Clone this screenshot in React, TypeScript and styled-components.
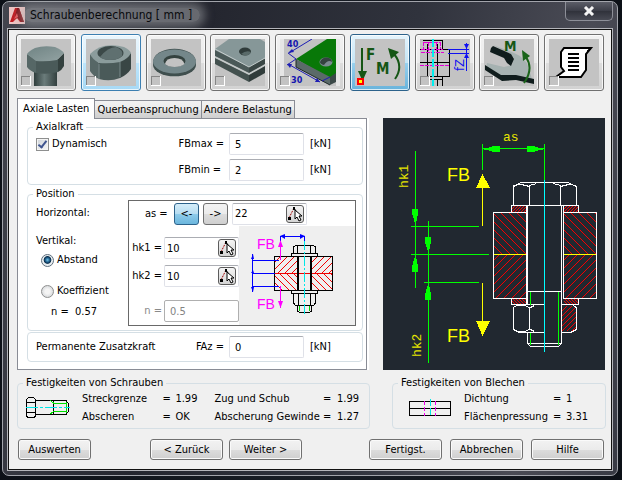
import React from 'react';
import styled, { createGlobalStyle, css } from 'styled-components';

const GlobalStyle = createGlobalStyle`
  *, *::before, *::after { box-sizing: border-box; }
  body {
    margin: 0;
    background: #10141b;
    color: #000;
    font: 11px/14px "DejaVu Sans Condensed", "DejaVu Sans", sans-serif;
    font-stretch: condensed;
  }
  button, input { font: inherit; color: inherit; margin: 0; }
`;

/* ---------- window ---------- */

const Desktop = styled.div`
  min-height: 100vh;
  padding: 1px 4px 4px 2px;
  background: linear-gradient(90deg, #0c1017, #181d25 50%, #0c1017);
`;

const Window = styled.div`
  border: 1px solid #a2a4ab;
  border-radius: 7px;
  padding: 0 4px 4px;
  background: linear-gradient(100deg, #43454e 0, #24262f 30%, #30333d 60%, #4a4b55 85%, #383a44 100%);
`;

const TitleBar = styled.header`
  display: flex;
  align-items: center;
  height: 26px;
  gap: 5px;
  padding-left: 2px;
`;

const Title = styled.h1`
  flex: 1;
  margin: 0;
  font-size: 12px;
  line-height: 22px;
  font-weight: 400;
  color: #08090c;

  span {
    padding: 0 8px 0 6px;
    margin-left: -6px;
    border-radius: 10px;
    background: rgba(168, 169, 174, 0.5);
    box-shadow: 0 0 10px 5px rgba(168, 169, 174, 0.5);
  }
`;

const CloseButton = styled.button`
  align-self: flex-start;
  width: 48px;
  height: 19px;
  padding: 0;
  border: 1px solid #8d8f98;
  border-top: 0;
  border-radius: 0 0 5px 5px;
  background: linear-gradient(#5b5d67, #3b3d47 50%, #30323b 51%, #484a54);
  svg { display: block; margin: 0 auto; }
`;

const Client = styled.main`
  border: 1px solid #b4b5ba;
  outline: 1px solid #111;
  outline-offset: -2px;
  padding: 5px 7px 10px 9px;
  background: #f0f0f0;
`;

/* ---------- toolbar ---------- */

const Toolbar = styled.div`
  display: flex;
  justify-content: space-between;
  margin: 0 1px 7px -1px;
`;

type ToolState = 'normal' | 'hover' | 'active';

const toolStates = {
  normal: css`
    border-color: #707070;
    background: linear-gradient(#f2f2f2, #ebebeb 50%, #dddddd 51%, #d2d2d2);
  `,
  hover: css`
    border-color: #3c7fb1;
    background: linear-gradient(#eaf6fd, #d9f0fc 50%, #bee6fd 51%, #a7d9f5);
  `,
  active: css`
    border-color: #2c628b;
    background: linear-gradient(#e5f4fc, #c4e5f6 50%, #98d1ef 51%, #68b3db);
  `,
};

const ToolButton = styled.button<{ $state: ToolState }>`
  height: 57px;
  padding: 4px;
  border: 1px solid;
  border-radius: 3px;
  box-shadow: inset 0 0 0 1px rgba(255, 255, 255, 0.75);
  ${(p) => toolStates[p.$state]}
  svg { display: block; background: #c3c3c3; }
`;

/* ---------- tabs and groups ---------- */

const Main = styled.div`
  display: grid;
  grid-template-columns: minmax(0, 350fr) minmax(0, 222fr);
  column-gap: 16px;
  align-items: end;
`;

const TabList = styled.div`
  display: flex;
  align-items: flex-end;
  height: 20px;
`;

const Tab = styled.button<{ $selected?: boolean }>`
  position: relative;
  height: ${(p) => (p.$selected ? 21 : 18)}px;
  padding: 0 ${(p) => (p.$selected ? 5 : 2)}px;
  border: 1px solid #898c95;
  border-bottom: 0;
  white-space: nowrap;
  background: ${(p) => (p.$selected ? '#fff' : 'linear-gradient(#f2f2f2, #ebebeb 50%, #dddddd 51%, #cfcfcf)')};
  margin-bottom: ${(p) => (p.$selected ? -1 : 0)}px;
  & + & { margin-left: -1px; }
`;

const TabPanel = styled.div`
  display: flex;
  flex-direction: column;
  border: 1px solid #898c95;
  box-shadow: 2px 0 0 #fff;
  padding: 2px 3px 7px 9px;
  background: #fff;
`;

const Group = styled.fieldset`
  min-width: 0;
  margin: 0;
  border: 1px solid #d5dfe5;
  border-radius: 4px;
  padding: 0 7px 3px 8px;
`;

const Legend = styled.legend`
  margin-left: -3px;
  padding: 0 3px;
  line-height: 12px;
`;

const AxialGrid = styled.div`
  display: grid;
  grid-template-columns: 1fr auto 75px 46px;
  align-items: center;
  gap: 4px 5px;
`;

const Unit = styled.span`
  padding-left: 1px;
`;

const CheckLabel = styled.label`
  display: flex;
  align-items: center;
  gap: 3px;
`;

const CheckBox = styled.input`
  appearance: none;
  display: grid;
  place-items: center;
  width: 13px;
  height: 13px;
  border: 1px solid #8e8f8f;
  background: linear-gradient(135deg, #cfd4da, #f6f6f6);
  box-shadow: inset 0 0 0 1px #f4f4f4;
  &:checked::before {
    content: "";
    width: 5px;
    height: 9px;
    margin-bottom: 2px;
    border: solid #3f548f;
    border-width: 0 2px 2px 0;
    transform: rotate(38deg);
  }
`;

const TextBox = styled.input`
  width: 75px;
  height: 22px;
  padding: 0 5px;
  border: 1px solid #dfe1e8;
  border-top-color: #abadb3;
  border-radius: 2px;
  background: #fff;
  &:disabled { color: #838383; border-color: #afafaf; }
`;

const PositionGroup = styled(Group)`
  margin: 3px 0 1px;
  padding-right: 6px;
  padding-bottom: 4px;
`;

const PositionLayout = styled.div`
  display: grid;
  grid-template-columns: 92px minmax(0, 1fr);
`;

const ModeColumn = styled.div`
  display: flex;
  flex-direction: column;
  padding-top: 6px;
`;

const ModeTitle = styled.span`
  margin-bottom: 14px;
  & + & { margin-bottom: 5px; }
`;

const RadioLabel = styled.label`
  display: flex;
  align-items: center;
  gap: 3px;
  height: 14px;
  margin-left: 5px;
  margin-bottom: 17px;
  & + & { margin-bottom: 7px; }
`;

const Radio = styled.input`
  appearance: none;
  width: 13px;
  height: 13px;
  border: 1px solid #8e8f8f;
  border-radius: 50%;
  background: radial-gradient(#f4f4f4 30%, #c8ccd0);
  &:checked {
    border-color: #5e6e7c;
    background: radial-gradient(circle at 50% 45%, #6fc4ea 0, #17527d 30%, #0d2f4c 42%, #e8edf0 52%);
  }
`;

const Coefficient = styled.span`
  padding-left: 15px;
`;

const PositionBox = styled.div`
  display: grid;
  grid-template-columns: minmax(0, 110fr) minmax(0, 116fr);
  border: 1px solid #696969;
`;

const HorizontalRow = styled.div`
  grid-column: 1 / -1;
  display: flex;
  align-items: center;
  height: 25px;
  padding-left: 16px;
  gap: 4px;
`;

const ArrowButton = styled.button<{ $active?: boolean }>`
  width: 25px;
  height: 22px;
  padding: 0;
  border: 1px solid ${(p) => (p.$active ? '#2c628b' : '#707070')};
  border-radius: 3px;
  background: ${(p) =>
    p.$active
      ? 'linear-gradient(#d5edf9, #b5dcf1 50%, #8fcbea 51%, #6bb6dd)'
      : 'linear-gradient(#f2f2f2, #ebebeb 50%, #dddddd 51%, #cfcfcf)'};
`;

const AxisLabel = styled.label`
  width: 25px;
`;

const PickBox = styled.span`
  display: flex;
  align-items: center;
  width: 75px;
  height: 22px;
  padding: 0 2px;
  border: 1px solid #dfe1e8;
  border-top-color: #abadb3;
  border-radius: 2px;
  background: #fff;
`;

const PickInput = styled.input`
  flex: 1;
  width: 0;
  height: 18px;
  padding: 0;
  border: 0;
  background: transparent;
`;

const PickButton = styled.button`
  width: 18px;
  height: 18px;
  padding: 0;
  border: 1px solid #5c5c5c;
  border-radius: 3px;
  background: linear-gradient(#f4f4f4, #d4d4d4);
  svg { display: block; }
`;

const VerticalFields = styled.div`
  display: flex;
  flex-direction: column;
  gap: 6px;
  padding-top: 11px;
`;

const FieldRow = styled.label<{ $muted?: boolean }>`
  display: flex;
  align-items: center;
  justify-content: flex-end;
  gap: 2px;
  white-space: nowrap;
  color: ${(p) => (p.$muted ? '#8a8a8a' : '#000')};
  margin-top: ${(p) => (p.$muted ? 7 : 0)}px;
`;

const Sketch = styled.svg`
  display: block;
  width: 100%;
  height: auto;
`;

const ForceGroup = styled(Group)`
  padding-top: 3px;
`;

/* ---------- results ---------- */

const Results = styled.div`
  display: grid;
  grid-template-columns: minmax(0, 353fr) minmax(0, 214fr);
  column-gap: 22px;
  margin: 7px -1px 10px 0;
`;

const ResultTable = styled.div<{ $wide?: boolean }>`
  display: grid;
  grid-template-columns: ${(p) => (p.$wide ? '56px 80fr 13px 39px 108fr 14px 32px' : '63px 89fr 13px 39px')};
  grid-auto-rows: 18px;
  align-items: center;
  padding-top: 1px;
  white-space: nowrap;
  svg { grid-row: 1 / 3; display: block; }
`;

const ResultGroup = styled(Group)`
  padding: 0 0 2px 8px;
`;

const Footer = styled.footer`
  display: grid;
  grid-template-columns: auto 59fr auto 67fr auto;
  padding: 0 1px;
`;

const ButtonSet = styled.div<{ $column: number; $gap: number }>`
  grid-column: ${(p) => p.$column};
  display: flex;
  gap: ${(p) => p.$gap}px;
`;

const PushButton = styled.button`
  width: 73px;
  height: 21px;
  padding: 0;
  border: 1px solid #707070;
  border-radius: 3px;
  box-shadow: inset 0 0 0 1px #fafafa;
  background: linear-gradient(#f2f2f2, #ebebeb 50%, #dddddd 51%, #cfcfcf);
`;

/* ---------- icons ---------- */

const Marker = () => (
  <g shapeRendering="crispEdges">
    <rect x="0" y="37" width="9" height="9" fill="#c3c3c3" />
    <path d="M0.5 46V37.5H9" fill="none" stroke="#858585" />
    <path d="M0 46.500H9.500V37" fill="none" stroke="#fff" />
  </g>
);

const ToolPicture = ({ width = 50, children }: { width?: number; children: React.ReactNode }) => (
  <svg width={width} height="47" viewBox={`0 0 ${width} 47`} aria-hidden="true">
    {children}
  </svg>
);

const BoltIcon = () => (
  <ToolPicture>
    <defs>
      <linearGradient id="steel">
        <stop offset="0" stopColor="#2f3d3c" />
        <stop offset="0.45" stopColor="#6b7c7b" />
        <stop offset="1" stopColor="#33403f" />
      </linearGradient>
      <linearGradient id="steelTop" x1="0" y1="0" x2="1" y2="1">
        <stop offset="0" stopColor="#6f8383" />
        <stop offset="1" stopColor="#93a3a3" />
      </linearGradient>
    </defs>
    <path d="M13 30H36V47H13Z" fill="url(#steel)" />
    <path d="M6 15L15 21V34Q9 32 6 28Z" fill="#566766" />
    <path d="M15 21L37 20V33Q26 36 15 34Z" fill="#4a5a59" />
    <path d="M37 20L43 14V27Q41 31 37 33Z" fill="#34413f" />
    <path d="M6 15Q8 12 14 9Q23 6 34 8Q41 11 43 14L36 21Q25 23 15 22Z" fill="url(#steelTop)" />
    <Marker />
  </ToolPicture>
);

const NutIcon = () => (
  <ToolPicture>
    <path d="M4 15L13 24V40Q7 37 4 32Z" fill="#566766" />
    <path d="M13 24L34 22V39Q24 43 13 40Z" fill="#4a5a59" />
    <path d="M34 22L45 14V30Q41 36 34 39Z" fill="#394645" />
    <path d="M4 15Q10 9 18 7Q28 5 38 8Q44 11 45 14Q42 20 34 23Q24 25 13 24Q6 20 4 15Z" fill="#8b9c9c" />
    <ellipse cx="24.500" cy="14" rx="13" ry="7" fill="#3b4948" />
    <path d="M14 18Q22 8 30 8Q38 11 36 17Q32 21 24 21Q17 21 14 18Z" fill="#5f7070" />
    <path d="M13 25V40M34 23V38" stroke="#78898a" strokeWidth="1" />
    <Marker />
  </ToolPicture>
);

const WasherIcon = () => (
  <ToolPicture>
    <path d="M2 23A21 13 0 0 1 45 23V26A21 11 0 0 1 2 26Z" fill="#3f4f4e" />
    <ellipse cx="23.500" cy="22.500" rx="21.500" ry="12" fill="#74878a" />
    <ellipse cx="23.500" cy="22" rx="11" ry="6" fill="#34423f" />
    <path d="M14 25Q15 19 23.500 19Q32 19 33.500 25Q30 28 23.500 28Q17 28 14 25Z" fill="#c3c3c3" />
    <Marker />
  </ToolPicture>
);

const PlatesIcon = () => (
  <ToolPicture>
    <path d="M0 10L14 0H45L50 3V20L34 29L0 11Z" fill="#869798" />
    <path d="M0 11L34 28V34L0 17Z" fill="#4a5958" />
    <path d="M34 28L50 19V25L34 34Z" fill="#394645" />
    <path d="M0 19L34 36V43L0 25Z" fill="#43514f" />
    <path d="M34 36L50 27V34L34 43Z" fill="#303c3b" />
    <path d="M0 18L34 35L50 26M0 10L34 28L50 19" fill="none" stroke="#c4cdcc" />
    <ellipse cx="30" cy="12.500" rx="6" ry="4" fill="#2f3b3a" />
    <path d="M26 15Q31 11 36 13Q34 17 30 16.500Z" fill="#596a69" />
    <Marker />
  </ToolPicture>
);

const DimensionsIcon = () => (
  <ToolPicture width={60}>
    <path d="M16 20L47 0H56V37L50 40Z" fill="#087808" />
    <path d="M16 20L50 38V46L16 28Z" fill="#5b6a69" />
    <path d="M50 38L56 34V43L50 46Z" fill="#3b4948" />
    <path d="M16 20V28L50 46" fill="none" stroke="#1c2626" />
    <ellipse cx="46" cy="23" rx="6.500" ry="4.500" fill="#7b8a90" />
    <path d="M40 23Q42 18 47 18.500Q52 19 52 23Q48 20 44 26Q40 25 40 23Z" fill="#34433f" />
    <path d="M32 0L9 14M16 20L8 14M16 20L7 26M50 38L42 42M8 25L40 43" fill="none" stroke="#1d1db4" />
    <path d="M8 14L12 10L14 13ZM7 25L12 25L10 29ZM40 43L35 43L37 39Z" fill="#1d1db4" />
    <text x="7" y="8" fill="#1414b0" fontFamily="DejaVu Sans" fontSize="9" fontWeight="700">40</text>
    <text x="11" y="44" fill="#1414b0" fontFamily="DejaVu Sans" fontSize="9" fontWeight="700">30</text>
    <path d="M56 0H60V47H56ZM0 0H4V47H0Z" fill="#e6e6e6" shapeRendering="crispEdges" />
    <Marker />
  </ToolPicture>
);

const LoadsIcon = () => (
  <ToolPicture>
    <path d="M7 9V33" stroke="#155615" strokeWidth="2" />
    <path d="M3 32H12L7.500 42Z" fill="#155615" />
    <text x="11" y="21" fill="#155615" fontFamily="DejaVu Sans" fontSize="15" fontWeight="700">F</text>
    <text x="21" y="35" fill="#155615" fontFamily="DejaVu Sans" fontSize="15" fontWeight="700">M</text>
    <path d="M40 40Q49 27 39 15" fill="none" stroke="#155615" strokeWidth="2" />
    <path d="M33 9L44 13L36 20Z" fill="#155615" />
    <g shapeRendering="crispEdges">
      <rect x="2" y="39" width="7" height="7" fill="#f00" />
      <rect x="4" y="41" width="3" height="3" fill="#ff0" />
    </g>
  </ToolPicture>
);

const PreloadIcon = () => (
  <ToolPicture>
    <g fill="none" shapeRendering="crispEdges">
      <path d="M0 10.500H29.500V37.500H0M0 23.500H29M7.500 5V37M17.500 5V37M3 1.500H22M22.500 1V10M2.500 37V47M7.500 40V47M17.500 40V47M22.500 37V47M2 40.500H23" stroke="#000" />
      <path d="M4 3.500H21M3.500 3V10M20.500 3V10M1 10.500H23M1 13.500H24M8.500 3V13M16.500 3V13M0 26.500H29" stroke="#e400d8" strokeDasharray="4 1" />
      <path d="M12.500 0V47" stroke="#00f0f0" strokeWidth="2" strokeDasharray="8 2" />
      <path d="M28 10.500H49M28 14.500H49M46.500 4V32" stroke="#1010f0" />
    </g>
    <path d="M44 5H49L46.500 10ZM44 19H49L46.500 14Z" fill="#1010f0" />
    <text transform="translate(44 32) rotate(-90)" fill="#1010f0" fontFamily="DejaVu Sans" fontSize="13">fZ</text>
    <Marker />
  </ToolPicture>
);

const WrenchIcon = () => (
  <ToolPicture>
    <path d="M9 6L28 13L36 17L43 24L48 40L32 37L18 38L2 30L3 24L20 28L28 26L30 19L26 15Z" fill="#a6b2b1" />
    <path d="M7 9L9 7L27 15L30 20L27 27L23 24L20 19L6 13Z" fill="#101d1d" />
    <path d="M1 26L17 36L32 36L50 40V45L32 41L18 42L1 31Z" fill="#101d1d" />
    <text x="20" y="12" fill="#155615" fontFamily="DejaVu Sans" fontSize="14" fontWeight="700">M</text>
    <path d="M40 44Q50 30 42 18" fill="none" stroke="#196419" strokeWidth="2" />
    <path d="M38 11L46 17L39 22Z" fill="#196419" />
    <Marker />
  </ToolPicture>
);

const ReportIcon = () => (
  <ToolPicture>
    <path d="M15 9H42L37 15V31L32 38H7L15 32L12 28V13Z" fill="#fff" stroke="#000" strokeWidth="2" />
    <path d="M38 12L42 9M7 38L14 33" stroke="#000" />
    <path d="M19 15H30M19 19H30M19 23H30M19 27H30M19 31H30" stroke="#000" strokeWidth="2" shapeRendering="crispEdges" />
    <Marker />
  </ToolPicture>
);

const AppLogo = () => (
  <svg width="16" height="17" viewBox="0 0 16 17" aria-hidden="true">
    <rect width="16" height="17" fill="#eec4c2" />
    <path d="M6 1H10L15 15H11L8 11L4 15H1Z" fill="#c01a20" />
    <path d="M8 1H10L15 15H12L8 10L7 12L6 10Z" fill="#7e0c12" />
    <path d="M5 12L8 6L9 10Z" fill="#e6555a" />
  </svg>
);

const PickIcon = () => (
  <svg width="16" height="16" viewBox="0 0 16 16" aria-hidden="true">
    <path d="M2 12L7 2" stroke="#a00000" strokeDasharray="2 1" />
    <path d="M7 2L13 11" stroke="#000" />
    <rect x="1" y="11" width="3" height="3" />
    <rect x="6" y="1" width="2" height="3" />
    <path d="M8 4V13L10 11L12 15L14 14L12 10H15Z" fill="#fff" stroke="#000" />
  </svg>
);

interface HatchProps {
  x: number;
  y: number;
  width: number;
  height: number;
  step: number;
  rising?: boolean;
}

/* Section hatching: 45 degree lines, clipped to the given rectangle. */
const Hatch = ({ x, y, width, height, step, rising }: HatchProps) => {
  const lines: string[] = [];
  for (let c = step - height; c < width + height; c += step) {
    const points: number[][] = [];
    const from = rising ? Math.max(0, c - height) : Math.max(0, c);
    const to = rising ? Math.min(width, c) : Math.min(width, c + height);
    if (from >= to) continue;
    for (const px of [from, to]) points.push([x + px, y + (rising ? c - px : px - c)]);
    lines.push(`M${points[0].join(' ')}L${points[1].join(' ')}`);
  }
  return <path d={lines.join('')} fill="none" stroke="#f40000" shapeRendering="crispEdges" />;
};

const PositionSketch = () => (
  <Sketch viewBox="0 0 116 99" role="img" aria-label="Position">
    <rect width="116" height="99" fill="#efefef" />
    <Hatch x={36} y={31} width={22} height={16} step={7} rising />
    <Hatch x={73} y={31} width={20} height={16} step={7} rising />
    <Hatch x={36} y={48} width={22} height={16} step={7} />
    <Hatch x={73} y={48} width={20} height={16} step={7} />
    <g fill="none" shapeRendering="crispEdges">
      <path d="M35 47.500H94" stroke="#f00000" />
      <path d="M35.500 30.500H93.500V64.500H35.500ZM52.500 27.500H78.500V30.500H52.500ZM52.500 64.500H78.500V67.500H52.500ZM54.500 27V21L56.500 19.500H74.500L76.500 21V27M58.500 20V27M71.500 20V27M54.500 67V77L56.500 79.500H74.500L76.500 77V67M59.500 67V79M71.500 67V79M58.500 79V85L60.500 86.500H70.500L72.500 85V79" stroke="#000" />
      <path d="M58.500 30V65M71.500 30V65" stroke="#000" strokeWidth="2" />
      <path d="M60.500 80V85M70.500 80V85" stroke="#00d000" />
      <path d="M65.500 14V90" stroke="#00e8e8" strokeDasharray="10 2 2 2" />
      <path d="M41.500 15V10.500H65.500V15M13.500 28V66M13 34.500H40M13 47.500H36M13 60.500H40" stroke="#0000ff" />
      <path d="M41.500 16V34M41.500 60V82" stroke="#ff00ff" />
    </g>
    <path d="M41 10L46 8V13ZM66 10L61 8V13ZM12 33L14 28L15 33ZM12 47L14 44L15 47ZM12 61L14 66L15 61Z" fill="#0000ff" />
    <path d="M41.500 14L44 21H39ZM41.500 82L44 75H39Z" fill="#ff00ff" />
    <g fill="#ff00ff" fontFamily="Liberation Sans" fontSize="14">
      <text x="18" y="23">FB</text>
      <text x="18" y="83">FB</text>
    </g>
  </Sketch>
);

const LoadDiagram = () => (
  <Sketch viewBox="0 0 222 252" role="img" aria-label="as, hk1, hk2, FB">
    <rect width="222" height="252" fill="#212830" />
    <Hatch x={111} y={95} width={32} height={41} step={8} />
    <Hatch x={181} y={95} width={32} height={41} step={8} />
    <Hatch x={111} y={137} width={32} height={43} step={8} rising />
    <Hatch x={181} y={137} width={32} height={43} step={8} rising />
    <Hatch x={129} y={88} width={14} height={6} step={3} rising />
    <Hatch x={181} y={88} width={14} height={6} step={3} rising />
    <Hatch x={129} y={181} width={14} height={5} step={3} />
    <Hatch x={181} y={181} width={14} height={5} step={3} />
    <Hatch x={179} y={188} width={14} height={25} step={5} rising />
    <g fill="none" shapeRendering="crispEdges">
      <path d="M110 136.500H144M180 136.500H214" stroke="#ffff00" />
      <path
        d="M110.500 94.500H144M110.500 94V180.500H144M180.500 94.500H213.500V180.500H180.500V87M128.500 94V87.500H195.500V94M128.500 180V186.500H161.500M178 186.500H195.500V180M130.500 87V68.500L135.500 66.500M193.500 87V68.500L188.500 66.500M138 64.500H185.500M130.500 68.500L138 64.500M193.500 68.500L185 64.500M146.500 87V67.500L153.500 65.500M177.500 87V67.500L170.500 65.500M130.500 67.500L138.500 66.500L146.500 68.500M177.500 68.500L185.500 66.500L193.500 67.500"
        stroke="#fff"
      />
      <path
        d="M178.500 87V226M144.500 173.500H179M130.500 189V211.500L136.500 214.500H161.500M130.500 189.500L133.500 187.500H142L146.500 190V211L142.500 213.500L136 214M146.500 211L151.500 213.500M146.500 190L151.500 187.500M178.500 214.500H187.500L193.500 211.500V190L190 187M144.500 214V225.500L147.500 228.500H175.500L178.500 225.500H144.500"
        stroke="#fff"
      />
      <path d="M144 88V187" stroke="#fff" strokeWidth="2" />
      <path d="M147.500 174V187M147.500 215V227M175.500 174V227" stroke="#00ff00" />
      <path d="M161.500 62V234" stroke="#00ffff" />
      <path
        d="M32.500 33V170M45.500 103V245M28 108.500H96M28 136.500H106M41 164.500H96M99.500 26V52M161.500 26V62M99 30.500H161"
        stroke="#00ff00"
      />
      <path d="M99.500 70V108M99.500 165V204" stroke="#ffff00" />
      <path d="M101 30H105L110 28H117V34H110L105 32H101ZM160 30H156L151 28H144V34H151L156 32H160Z" fill="#00ff00" />
      <path
        d="M29 91H35V96L34 101L33 106H32L31 101L29 96ZM42 119H48V124L46 134H45L42 124ZM32 138H33L35 148V154H29V149ZM45 166H46L48 177V182H42V177Z"
        fill="#00ff00"
      />
      <path d="M99.500 56L107 70H93ZM99.500 218L107 203H93Z" fill="#ffff00" />
    </g>
    <g fill="#ffff00" fontFamily="Liberation Sans" fontSize="18">
      <text x="64" y="63">FB</text>
      <text x="64" y="224">FB</text>
    </g>
    <g fill="#e6e600" fontFamily="Liberation Mono" fontSize="13">
      <text x="120" y="23">as</text>
      <text transform="translate(25 70) rotate(-90)">hk1</text>
      <text transform="translate(38 239) rotate(-90)">hk2</text>
    </g>
  </Sketch>
);

const ScrewSketch = () => (
  <svg width="44" height="22" viewBox="0 0 44 22" aria-hidden="true" shapeRendering="crispEdges">
    <path d="M2.500 0.500H7.500L9.500 2.500V19.500L7.500 20.500H2.500L0.500 19.500V2.500ZM1 5.500H9M1 15.500H9M9 3.500H40L42.500 6.500V14.500L40 17.500H9M27.500 3V17M40.500 4V17" fill="none" stroke="#000" />
    <path d="M24 3L28 6.500H41M24 17L28 14.500H41M40.500 5V16" fill="none" stroke="#00e000" />
    <path d="M0 10.500H44" stroke="#00e8e8" strokeDasharray="12 2 3 2" />
  </svg>
);

const PlateSketch = () => (
  <svg width="59" height="18" viewBox="-8 0 59 18" aria-hidden="true" shapeRendering="crispEdges">
    <path d="M0.500 2.500H41.500V16.500H0.500ZM0 9.500H42" fill="none" stroke="#000" />
    <path d="M15.500 2V17M26.500 2V17" stroke="#f000f0" strokeDasharray="4 2" />
    <path d="M21.500 0V18" stroke="#00e8e8" strokeDasharray="7 2" />
  </svg>
);

/* ---------- content ---------- */

const tools: { label: string; state: ToolState; icon: React.ReactNode }[] = [
  { label: 'Schraube', state: 'normal', icon: <BoltIcon /> },
  { label: 'Mutter', state: 'hover', icon: <NutIcon /> },
  { label: 'Scheibe', state: 'normal', icon: <WasherIcon /> },
  { label: 'Bleche', state: 'normal', icon: <PlatesIcon /> },
  { label: 'Abmessungen', state: 'normal', icon: <DimensionsIcon /> },
  { label: 'Lasten', state: 'active', icon: <LoadsIcon /> },
  { label: 'Vorspannung', state: 'normal', icon: <PreloadIcon /> },
  { label: 'Anzugsmoment', state: 'normal', icon: <WrenchIcon /> },
  { label: 'Ergebnisse', state: 'normal', icon: <ReportIcon /> },
];

const PickField = ({ id, value }: { id: string; value: string }) => (
  <PickBox>
    <PickInput id={id} defaultValue={value} />
    <PickButton type="button" aria-label="Punkt wählen">
      <PickIcon />
    </PickButton>
  </PickBox>
);

const Result = ({ label, value }: { label: string; value: string }) => (
  <>
    <span>{label}</span>
    <span>=</span>
    <span>{value}</span>
  </>
);

export default function App() {
  return (
    <Desktop>
      <GlobalStyle />
      <Window>
        <TitleBar>
          <AppLogo />
          <Title><span>Schraubenberechnung [ mm ]</span></Title>
          <CloseButton type="button" aria-label="Schließen">
            <svg width="12" height="10" viewBox="0 0 12 10">
              <path d="M2 1L10 9M10 1L2 9" stroke="#f4f4f4" strokeWidth="3" />
            </svg>
          </CloseButton>
        </TitleBar>
        <Client>
          <Toolbar>
            {tools.map((t) => (
              <ToolButton key={t.label} type="button" aria-label={t.label} $state={t.state}>
                {t.icon}
              </ToolButton>
            ))}
          </Toolbar>

          <Main>
            <div>
              <TabList role="tablist">
                <Tab role="tab" aria-selected="true" $selected>Axiale Lasten</Tab>
                <Tab role="tab" aria-selected="false">Querbeanspruchung</Tab>
                <Tab role="tab" aria-selected="false">Andere Belastung</Tab>
              </TabList>
              <TabPanel role="tabpanel">
                <Group>
                  <Legend>Axialkraft</Legend>
                  <AxialGrid>
                    <CheckLabel>
                      <CheckBox type="checkbox" defaultChecked />
                      Dynamisch
                    </CheckLabel>
                    <label htmlFor="fbmax">FBmax =</label>
                    <TextBox id="fbmax" defaultValue="5" />
                    <Unit>[kN]</Unit>
                    <span />
                    <label htmlFor="fbmin">FBmin =</label>
                    <TextBox id="fbmin" defaultValue="2" />
                    <Unit>[kN]</Unit>
                  </AxialGrid>
                </Group>

                <PositionGroup>
                  <Legend>Position</Legend>
                  <PositionLayout>
                    <ModeColumn>
                      <ModeTitle>Horizontal:</ModeTitle>
                      <ModeTitle>Vertikal:</ModeTitle>
                      <RadioLabel>
                        <Radio type="radio" name="mode" defaultChecked />
                        Abstand
                      </RadioLabel>
                      <RadioLabel>
                        <Radio type="radio" name="mode" />
                        Koeffizient
                      </RadioLabel>
                      <Coefficient>n = &nbsp;0.57</Coefficient>
                    </ModeColumn>
                    <PositionBox>
                      <HorizontalRow>
                        <AxisLabel htmlFor="as">as =</AxisLabel>
                        <ArrowButton type="button" $active>&lt;-</ArrowButton>
                        <ArrowButton type="button">-&gt;</ArrowButton>
                        <PickField id="as" value="22" />
                      </HorizontalRow>
                      <VerticalFields>
                        <FieldRow htmlFor="hk1">hk1 = <PickField id="hk1" value="10" /></FieldRow>
                        <FieldRow htmlFor="hk2">hk2 = <PickField id="hk2" value="10" /></FieldRow>
                        <FieldRow $muted>n = <TextBox defaultValue="0.5" disabled /></FieldRow>
                      </VerticalFields>
                      <PositionSketch />
                    </PositionBox>
                  </PositionLayout>
                </PositionGroup>

                <ForceGroup aria-label="Permanente Zusatzkraft">
                  <AxialGrid>
                    <span>Permanente Zusatzkraft</span>
                    <label htmlFor="faz">FAz =</label>
                    <TextBox id="faz" defaultValue="0" />
                    <Unit>[kN]</Unit>
                  </AxialGrid>
                </ForceGroup>
              </TabPanel>
            </div>
            <LoadDiagram />
          </Main>

          <Results>
            <ResultGroup>
              <Legend>Festigkeiten von Schrauben</Legend>
              <ResultTable $wide>
                <ScrewSketch />
                <Result label="Streckgrenze" value="1.99" />
                <Result label="Zug und Schub" value="1.99" />
                <Result label="Abscheren" value="OK" />
                <Result label="Abscherung Gewinde" value="1.27" />
              </ResultTable>
            </ResultGroup>
            <ResultGroup>
              <Legend>Festigkeiten von Blechen</Legend>
              <ResultTable>
                <PlateSketch />
                <Result label="Dichtung" value="1" />
                <Result label="Flächenpressung" value="3.31" />
              </ResultTable>
            </ResultGroup>
          </Results>

          <Footer>
            <ButtonSet $column={1} $gap={0}>
              <PushButton type="button">Auswerten</PushButton>
            </ButtonSet>
            <ButtonSet $column={3} $gap={6}>
              <PushButton type="button">&lt; Zurück</PushButton>
              <PushButton type="button">Weiter &gt;</PushButton>
            </ButtonSet>
            <ButtonSet $column={5} $gap={8}>
              <PushButton type="button">Fertigst.</PushButton>
              <PushButton type="button">Abbrechen</PushButton>
              <PushButton type="button">Hilfe</PushButton>
            </ButtonSet>
          </Footer>
        </Client>
      </Window>
    </Desktop>
  );
}
